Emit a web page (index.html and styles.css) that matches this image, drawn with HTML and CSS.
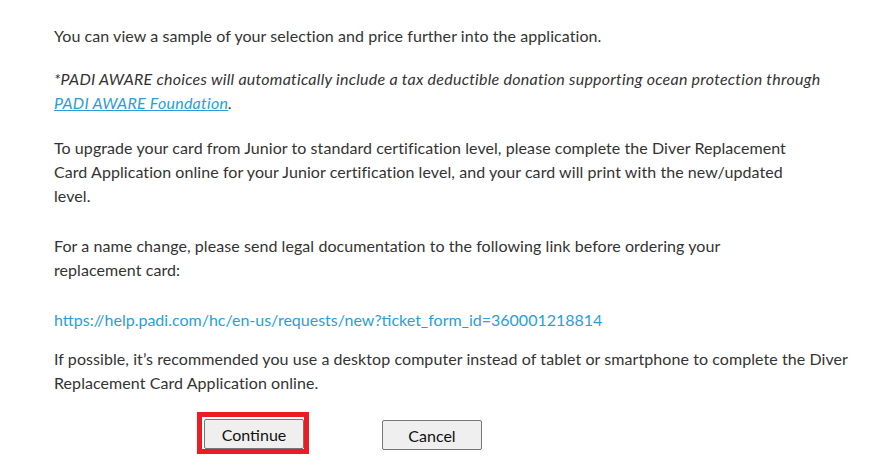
FILE: index.html
```html
<!DOCTYPE html>
<html lang="en">
<head>
    <meta charset="UTF-8">
    <title>Replacement Card</title>
    <link rel="stylesheet" href="styles.css">
</head>
<body>
<div class="content">
    <p class="p-sample">You can view a sample of your selection and price further into the application.</p>
    <p class="p-aware"><em>*PADI AWARE choices will automatically include a tax deductible donation supporting ocean protection through<br>
        <a href="#">PADI AWARE Foundation</a>.</em></p>
    <p class="p-upgrade">To upgrade your card from Junior to standard certification level, please complete the Diver Replacement<br>
        Card Application online for your Junior certification level, and your card will print with the new/updated<br>
        level.</p>
    <p class="p-name">For a name change, please send legal documentation to the following link before ordering your<br>
        replacement card:</p>
    <p class="p-link"><a class="plain" href="#">https://help.padi.com/hc/en-us/requests/new?ticket_form_id=360001218814</a></p>
    <p class="p-desktop">If possible, it’s recommended you use a desktop computer instead of tablet or smartphone to complete the Diver<br>
        Replacement Card Application online.</p>
    <div class="actions">
        <span class="focus"><button class="btn" type="button">Continue</button></span>
        <button class="btn btn-cancel" type="button">Cancel</button>
    </div>
</div>
</body>
</html>
```

FILE: styles.css
```css
* {
    margin: 0;
    padding: 0;
    box-sizing: border-box;
}
body {
    background: #fff;
    font-family: Lato, "Liberation Sans", sans-serif;
    font-size: 16px;
    line-height: 24px;
    color: #333333;
}
.content {
    padding: 24px 0 0 54px;
    white-space: nowrap;
    letter-spacing: 0.07px;
}
.content em {
    letter-spacing: 0.25px;
}
.content a {
    color: #2a9ed8;
    text-decoration: underline;
}
.content a.plain {
    text-decoration: none;
    letter-spacing: 0;
}
.p-aware {
    margin-top: 19px;
}
.p-upgrade {
    margin-top: 21px;
}
.p-name {
    margin-top: 26px;
}
.p-link {
    margin-top: 26px;
}
.p-desktop {
    margin-top: 15px;
}
.actions {
    display: flex;
    align-items: flex-start;
    margin-top: 17px;
    padding-left: 143px;
}
.focus {
    display: inline-block;
    border: 5px solid #ec1c24;
    padding: 2px 0 0 2px;
}
.btn {
    display: block;
    width: 100px;
    height: 30px;
    font-family: inherit;
    font-size: 16px;
    letter-spacing: 0;
    color: #111;
    background: #efefef;
    border: 1px solid #767676;
    border-radius: 2px;
}
.btn-cancel {
    margin-left: 73px;
    margin-top: 8px;
}
```
